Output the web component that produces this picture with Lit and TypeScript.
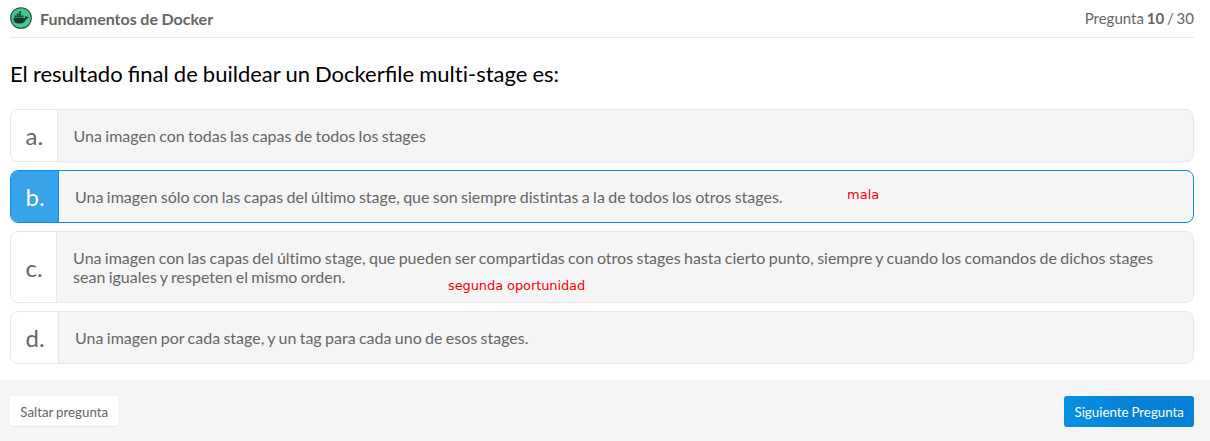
import { LitElement, html, css } from "lit";
import { customElement } from "lit/decorators.js";
import { classMap } from "lit/directives/class-map.js";

interface Option { letter: string; text: string; selected?: boolean }

@customElement("app-root")
export class AppRoot extends LitElement {
  static styles = css`
    :host { display: block; position: relative; height: 441px; background: #fff; font-family: Lato, sans-serif; color: #666; overflow: hidden; word-spacing: -0.75px; }
    * { box-sizing: border-box; }
    header { display: flex; align-items: center; margin: 0 16px 0 10px; height: 38px; border-bottom: 1px solid #e8e8e8; font-size: 15px; }
    header svg { width: 22px; height: 22px; margin: -1px 8px 0 0; }
    .title { font-size: 16px; word-spacing: -0.3px; }
    .count { margin: -2px 0 0 auto; word-spacing: -1px; }
    h1 { margin: 23px 0 0 10px; height: 48px; line-height: 26px; font-size: 22px; font-weight: 400; color: #000; word-spacing: -0.55px; }
    .plain { font-variant-ligatures: none; }
    .options { display: grid; grid-template-rows: 53px 53px 72px 53px; gap: 8px; margin: 0 16px 0 10px; }
    .option { display: flex; border: 1px solid #e8e8e8; border-radius: 8px; background: #f5f5f5; overflow: hidden; font-size: 16px; line-height: 19px; font-variant-ligatures: none; }
    .letter { display: flex; align-items: center; flex: none; padding: 0 13.4px 0 14.6px; background: #fff; border-right: 1px solid #e8e8e8; font-size: 24px; }
    .text { align-self: center; padding: 0 16px; }
    .selected { border-color: #0791e6; }
    .selected .letter { background: #37a3ea; color: #fff; border-color: #0791e6; }
    footer { display: flex; justify-content: space-between; align-items: flex-start; margin-top: 16px; padding: 16px 16px 0 10px; height: 61px; background: #f5f5f5; }
    button { height: 30px; border: 0; border-radius: 3px; padding: 1px 10.3px 0; font: 13.33px Lato, sans-serif; word-spacing: -0.6px; background: #fff; color: #666; box-shadow: 0 1px 0 #e8e8e8; }
    .next { height: 31px; padding: 1px 10px 0; background: linear-gradient(100deg, #0791e6, #0582d6 50%); color: #fff; box-shadow: none; }
    .note { position: absolute; font: 13px/14px "DejaVu Sans", sans-serif; word-spacing: 0; color: #f00; }
    .bad { left: 847px; top: 188px; }
    .second { left: 448px; top: 279px; letter-spacing: -0.1px; }
  `;
  options: Option[] = [
    { letter: "a.", text: "Una imagen con todas las capas de todos los stages" },
    { letter: "b.", text: "Una imagen sólo con las capas del último stage, que son siempre distintas a la de todos los otros stages.", selected: true },
    { letter: "c.", text: "Una imagen con las capas del último stage, que pueden ser compartidas con otros stages hasta cierto punto, siempre y cuando los comandos de dichos stages sean iguales y respeten el mismo orden." },
    { letter: "d.", text: "Una imagen por cada stage, y un tag para cada uno de esos stages." },
  ];
  render() {
    return html`
      <header>
        <svg viewBox="0 0 22 22">
          <circle cx="11" cy="11" r="10.3" fill="#43c98c" stroke="#244b43" stroke-width="1.1"/>
          <path fill="#15382f" d="M3.3 10.9H14.7C15.2 10.4 15 9.2 15.5 8.7C16.3 9 16.7 9.6 16.8 10.1C17.5 9.9 18.4 10 18.9 10.3C18.5 11.3 17.7 11.7 16.5 11.7C15.3 15 12.8 16.6 9.3 16.6C5.7 16.6 3.2 14.9 3.3 10.9Z"/>
          <path fill="#15382f" d="M4.5 8.6h2v1.9h-2zM6.8 8.6h2v1.9h-2zM9.1 8.6h2v1.9h-2zM11.4 8.6h2v1.9h-2zM6.8 6.4h2v1.9h-2zM9.1 6.4h2v1.9h-2zM9.1 4.3h2v1.8h-2z"/>
        </svg>
        <b class="title">Fundamentos de Docker</b>
        <span class="count">Pregunta <b>10</b> / 30</span>
      </header>
      <h1>El resultado final de buildear un Dockerfile <span class="plain">multi-stage</span> es:</h1>
      <div class="options">
        ${this.options.map(o => html`<div class=${classMap({ option: true, selected: !!o.selected })}><span class="letter">${o.letter}</span><span class="text">${o.text}</span></div>`)}
      </div>
      <footer><button>Saltar pregunta</button><button class="next">Siguiente Pregunta</button></footer>
      <span class="note bad">mala</span>
      <span class="note second">segunda oportunidad</span>
    `;
  }
}
